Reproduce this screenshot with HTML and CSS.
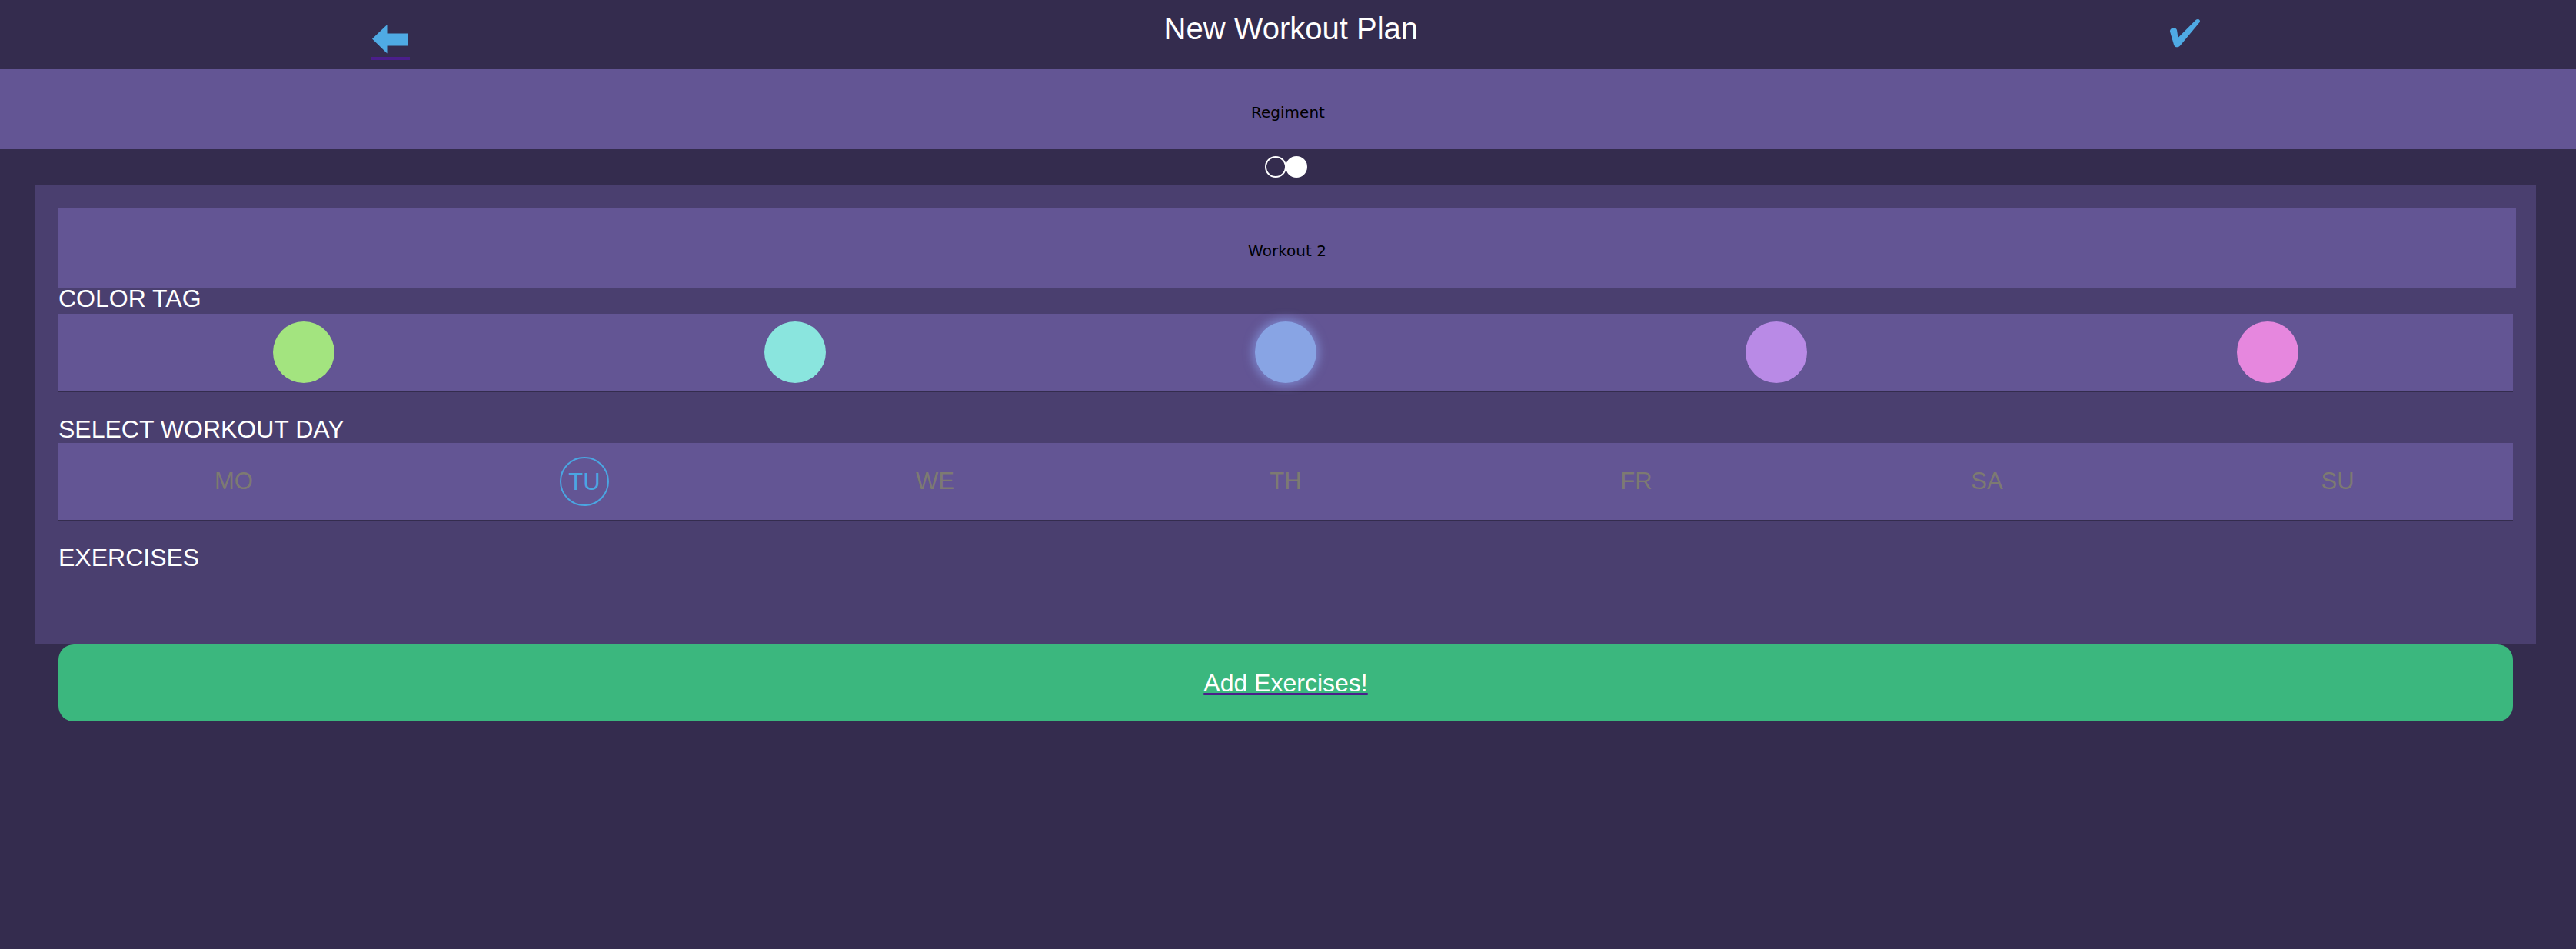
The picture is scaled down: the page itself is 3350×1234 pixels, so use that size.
FILE: index.html
```html
<!DOCTYPE html>
<html lang="en">
<head>
<meta charset="utf-8">
<title>New Workout Plan</title>
<link rel="stylesheet" href="styles.css">
</head>
<body>
<header class="topbar">
  <a class="back" href="#" aria-label="Back">
    <svg class="back-icon" width="51" height="38" viewBox="0 0 51 38"><polygon points="2,18.5 21.5,0 21.5,11.5 48,11.5 48,27.5 21.5,27.5 21.5,37.5" fill="#4faae4"/></svg>
  </a>
  <h1 class="title">New Workout Plan</h1>
  <a class="done" href="#" aria-label="Save">
    <svg width="40" height="38" viewBox="0 0 40 38"><path d="M5 17 C4.5 12 12.5 10.5 14 15 L15.5 25 L38.5 2 C41 -0.5 45.5 1.5 43.5 5 L18.5 35 C16 38.5 11 38 10 34 L5 17 Z" fill="#4faae4"/></svg>
  </a>
</header>

<div class="regiment">Regiment</div>

<div class="pager">
  <span class="dot dot-empty"></span><span class="dot dot-full"></span>
</div>

<section class="card">
  <div class="name-field">Workout 2</div>

  <h2 class="label label-color">COLOR TAG</h2>
  <div class="row colors">
    <div class="cell"><span class="swatch swatch-green"></span></div>
    <div class="cell"><span class="swatch swatch-teal"></span></div>
    <div class="cell"><span class="swatch swatch-blue selected"></span></div>
    <div class="cell"><span class="swatch swatch-purple"></span></div>
    <div class="cell"><span class="swatch swatch-pink"></span></div>
  </div>

  <h2 class="label label-day">SELECT WORKOUT DAY</h2>
  <div class="row days">
    <div class="cell"><span class="day">MO</span></div>
    <div class="cell"><span class="day day-selected">TU</span></div>
    <div class="cell"><span class="day">WE</span></div>
    <div class="cell"><span class="day">TH</span></div>
    <div class="cell"><span class="day">FR</span></div>
    <div class="cell"><span class="day">SA</span></div>
    <div class="cell"><span class="day">SU</span></div>
  </div>

  <h2 class="label label-ex">EXERCISES</h2>
</section>

<div class="actions">
  <a class="add-btn" href="#"><span class="add-text">Add Exercises!</span></a>
</div>
</body>
</html>
```

FILE: styles.css
```css
html, body {
  margin: 0;
  padding: 0;
}

body {
  background: #342c4e;
  font-family: "Liberation Sans", Arial, sans-serif;
  color: #ffffff;
  width: 3350px;
  min-height: 1234px;
}

/* ---------- Top bar ---------- */
.topbar {
  height: 90px;
  padding-right: 6px;
  display: flex;
  justify-content: space-around;
  align-items: flex-start;
}

.back {
  display: block;
  width: 51px;
  margin: 32px 6px 0 -6px;
  padding-bottom: 4px;
  border-bottom: 4px solid #4b1e8b;
}

.back-icon {
  display: block;
}

.title {
  width: 328px;
  margin: 0;
  padding-top: 17px;
  font-size: 40px;
  line-height: 40px;
  font-weight: normal;
  text-align: center;
  white-space: nowrap;
  color: #ffffff;
}

.done {
  display: block;
  width: 40px;
  margin-top: 24px;
}

.done svg {
  display: block;
  overflow: visible;
}

/* ---------- Regiment band ---------- */
.regiment {
  height: 104px;
  box-sizing: border-box;
  padding-top: 8px;
  background: #635594;
  text-align: center;
  font-family: "DejaVu Sans", sans-serif;
  font-size: 20px;
  line-height: 96px;
  color: #000000;
}

/* ---------- Pager dots ---------- */
.pager {
  height: 46px;
  display: flex;
  justify-content: center;
  align-items: center;
  padding-right: 6px;
}

.dot {
  width: 28px;
  height: 28px;
  border-radius: 50%;
  box-sizing: border-box;
}

.dot-empty {
  border: 2px solid #ffffff;
}

.dot-full {
  background: #ffffff;
  margin-left: -1px;
}

/* ---------- Card ---------- */
.card {
  margin: 0 52px 0 46px;
  padding: 30px 26px 99px 30px;
  background: #4a3f6f;
}

.name-field {
  height: 104px;
  box-sizing: border-box;
  padding-top: 8px;
  background: #635594;
  text-align: center;
  font-family: "DejaVu Sans", sans-serif;
  font-size: 20px;
  line-height: 96px;
  color: #000000;
}

.label {
  margin: 0;
  font-size: 32px;
  line-height: 28px;
  font-weight: normal;
  color: #ffffff;
}

.label-day {
  margin-top: 34px;
}

.label-ex {
  margin-top: 33px;
}

.row {
  display: flex;
  height: 100px;
  margin-right: 4px;
  background: #635594;
  border-bottom: 2px solid #342c4e;
}

.colors {
  margin-top: 6px;
}

.days {
  margin-top: 4px;
}

.cell {
  flex: 1;
  display: flex;
  justify-content: center;
  align-items: center;
}

/* colour swatches */
.swatch {
  width: 80px;
  height: 80px;
  border-radius: 50%;
}

.swatch-green { background: #a3e47f; }
.swatch-teal { background: #8ae5de; }
.swatch-blue { background: #88a4e4; }
.swatch-purple { background: #b98ae6; }
.swatch-pink { background: #e687de; }

.swatch.selected {
  box-shadow: 0 0 12px 4px rgba(140, 165, 240, 0.55);
}

/* days */
.day {
  font-size: 31px;
  line-height: 100px;
  color: #7d7a72;
}

.day-selected {
  display: flex;
  justify-content: center;
  align-items: center;
  width: 64px;
  height: 64px;
  box-sizing: border-box;
  border: 2px solid #4aa6e2;
  border-radius: 50%;
  color: #4aa6e2;
  line-height: 1;
  padding-top: 1px;
}

/* ---------- Add button ---------- */
.actions {
  padding: 0 82px 0 76px;
}

.add-btn {
  display: block;
  height: 100px;
  border-radius: 20px;
  background: #3bb77e;
  text-align: center;
  font-size: 32px;
  line-height: 100px;
  color: #ffffff;
  text-decoration: none;
}

.add-text {
  text-decoration: underline;
  text-decoration-color: #4b1e8b;
  text-decoration-thickness: 3px;
  text-underline-offset: 2px;
}
```
